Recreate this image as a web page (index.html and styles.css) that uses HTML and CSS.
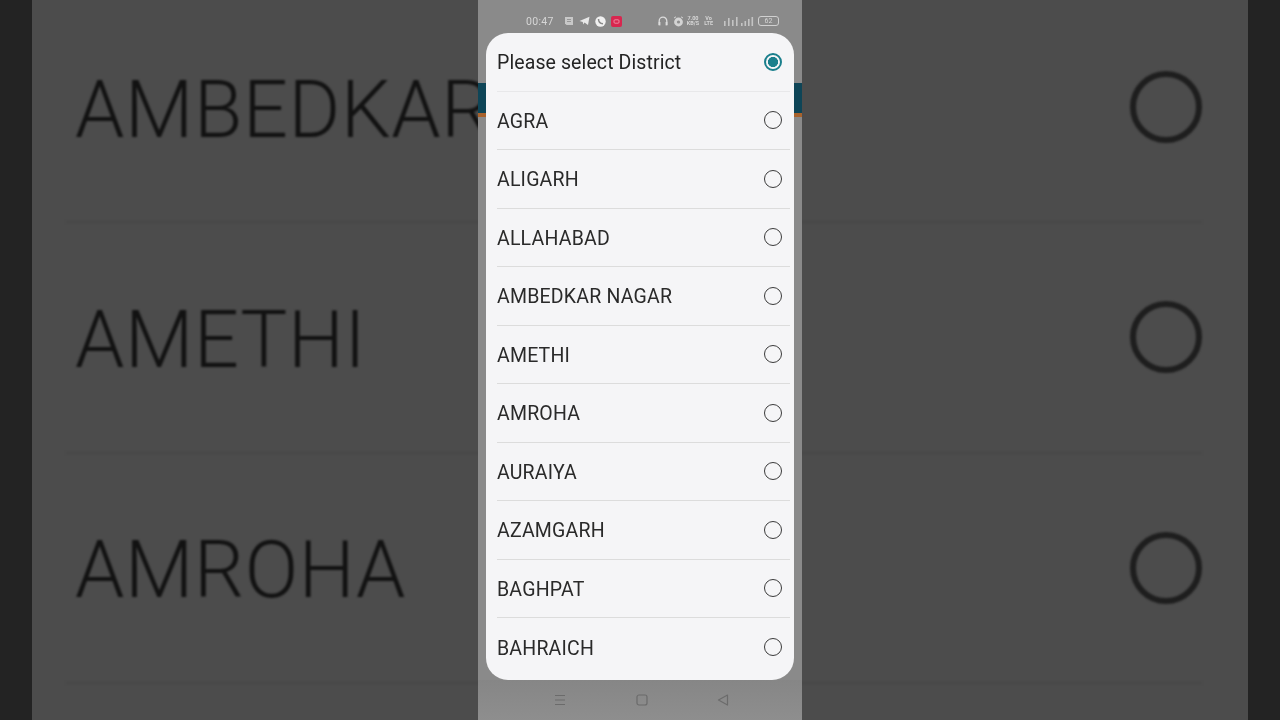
FILE: index.html
```html
<!DOCTYPE html>
<html lang="en">
<head>
<meta charset="utf-8">
<title>Please select District</title>
<link rel="stylesheet" href="styles.css">
</head>
<body>
<div class="video">
  <div class="backdrop">
    <div class="big-row"><span class="big-label">AMBEDKAR</span><span class="big-radio"></span></div>
    <div class="big-row"><span class="big-label">AMETHI</span><span class="big-radio"></span></div>
    <div class="big-row"><span class="big-label">AMROHA</span><span class="big-radio"></span></div>
    <div class="big-row"><span class="big-label"></span></div>
  </div>
  <div class="phone">
    <div class="teal-band"></div>
    <div class="statusbar">
      <div class="status-left">
        <span class="clock">00:47</span>
        <svg class="ico" width="10" height="10" viewBox="0 0 10 10"><path d="M1 1h8v8H2.500L1 7.500z" fill="#c8c8c8"/><path d="M3 3.500h4M3 5.500h4" stroke="#8a8a8a" stroke-width=".8"/></svg>
        <svg class="ico" width="11" height="10" viewBox="0 0 11 10"><path d="M0.500 5L10.500 .8 9 9 5.500 6.600 4.200 8.500 3.800 6z" fill="#e8e8e8"/></svg>
        <svg class="ico" width="11" height="11" viewBox="0 0 11 11"><circle cx="5.500" cy="5.500" r="5.200" fill="#f0f0f0"/><path d="M3.500 3C3.500 5.500 5 7.500 8 7.800" stroke="#8a8a8a" stroke-width="1.500" fill="none"/></svg>
        <svg class="ico" width="11" height="11" viewBox="0 0 11 11"><rect width="11" height="11" rx="2" fill="#d8264f"/><rect x="3" y="3.800" width="5" height="3.400" rx="1" fill="none" stroke="#f2a0b4" stroke-width=".8"/></svg>
      </div>
      <div class="status-right">
        <svg class="ico" width="10" height="10" viewBox="0 0 10 10"><path d="M1.200 9V5a3.800 3.800 0 0 1 7.600 0v4" fill="none" stroke="#dcdcdc" stroke-width="1.300"/><rect x=".6" y="6" width="1.800" height="3.400" fill="#dcdcdc"/><rect x="7.600" y="6" width="1.800" height="3.400" fill="#dcdcdc"/></svg>
        <svg class="ico" width="11" height="11" viewBox="0 0 11 11"><circle cx="5.500" cy="6" r="4.400" fill="#d4d4d4"/><circle cx="5.500" cy="6" r="1.600" fill="#8f8f8f"/><path d="M1 2L3 .8M10 2L8 .8" stroke="#d4d4d4"/></svg>
        <span class="speed first">7.00<br>KB/S</span>
        <span class="speed">Vo<br>LTE</span>
        <svg class="ico sig" width="16" height="10" viewBox="0 0 16 10"><path d="M1 5h1.600v5H1zM5 2h1.600v8H5zM9 4h1.600v6H9zM13 1h1.600v9H13z" fill="#c4c4c4"/></svg>
        <svg class="ico sig2" width="14" height="10" viewBox="0 0 14 10"><path d="M1 7h1.600v3H1zM4.500 5h1.600v5H4.500zM8 3h1.600v7H8zM11.500 1h1.600v9h-1.600z" fill="#c4c4c4"/></svg>
        <span class="battery">62</span>
      </div>
    </div>
    <div class="dialog">
      <div class="option head"><span>Please select District</span><span class="radio on"></span></div>
      <div class="option"><span>AGRA</span><span class="radio"></span></div>
      <div class="option"><span>ALIGARH</span><span class="radio"></span></div>
      <div class="option"><span>ALLAHABAD</span><span class="radio"></span></div>
      <div class="option"><span>AMBEDKAR NAGAR</span><span class="radio"></span></div>
      <div class="option"><span>AMETHI</span><span class="radio"></span></div>
      <div class="option"><span>AMROHA</span><span class="radio"></span></div>
      <div class="option"><span>AURAIYA</span><span class="radio"></span></div>
      <div class="option"><span>AZAMGARH</span><span class="radio"></span></div>
      <div class="option"><span>BAGHPAT</span><span class="radio"></span></div>
      <div class="option last"><span>BAHRAICH</span><span class="radio"></span></div>
    </div>
    <div class="navbar">
      <svg width="14" height="12" viewBox="0 0 14 12"><path d="M2 1.500h10M2 6h10M2 10.500h10" stroke="#6b6b6b" stroke-width="1.200"/></svg>
      <svg width="12" height="12" viewBox="0 0 12 12"><rect x="1" y="1" width="10" height="10" rx="2" fill="none" stroke="#6b6b6b" stroke-width="1.200"/></svg>
      <svg width="12" height="12" viewBox="0 0 12 12"><path d="M10.500 1L1.500 6l9 5z" fill="none" stroke="#6b6b6b" stroke-width="1.200" stroke-linejoin="round"/></svg>
    </div>
  </div>
</div>
</body>
</html>
```

FILE: styles.css
```css
* { box-sizing: border-box; }
html, body { margin: 0; height: 100%; }
body { background: #232323; overflow: hidden; font-family: Roboto, "Noto Sans", sans-serif; }

.video {
  position: relative;
  width: 1280px;
  height: 720px;
  padding: 0 32px;
  overflow: hidden;
}

.backdrop {
  height: 720px;
  background: #4c4c4c;
  padding: 0 46px 0 34px;
  overflow: hidden;
}
.big-row {
  height: 230.500px;
  padding-left: 9px;
  display: flex;
  align-items: center;
  justify-content: space-between;
  border-bottom: 2px solid #484848;
  filter: blur(.9px);
}
.big-row:first-child { height: 223px; padding-bottom: 7px; }
.big-label {
  margin-top: 6px;
  font-size: 79px;
  font-weight: 300;
  letter-spacing: .6px;
  color: #121212;
  white-space: nowrap;
  line-height: 1;
}
.big-radio {
  flex: none;
  width: 72px;
  height: 72px;
  border: 6px solid #1e1e1e;
  border-radius: 50%;
}

.phone {
  position: absolute;
  top: 0;
  left: 478px;
  width: 324px;
  height: 720px;
  background: #8a8a8a;
  padding: 0 8px;
  display: flex;
  flex-direction: column;
}
.teal-band {
  position: absolute;
  left: 0;
  right: 0;
  top: 83px;
  height: 34px;
  background: #0e4557;
  border-bottom: 4px solid #a8622c;
}
.statusbar {
  height: 33px;
  flex: none;
  padding: 9px 15px 0 40px;
  display: flex;
  align-items: center;
  justify-content: space-between;
  color: #d6d6d6;
  font-size: 10.500px;
  filter: blur(.3px);
}
.status-left, .status-right { display: flex; align-items: center; }
.status-left { gap: 5px; }
.status-right { gap: 5px; }
.clock { margin-right: 5px; letter-spacing: .3px; }
.speed { font-size: 5.500px; line-height: 5.500px; text-align: center; font-weight: 700; }
.speed.first { margin-left: -2px; }
.sig { margin-left: 5px; }
.sig2 { margin-left: -4px; }
.ico { display: block; flex: none; }
.battery {
  width: 21px;
  height: 10px;
  margin-left: -1px;
  border: 1px solid #d0d0d0;
  border-radius: 3px;
  font-size: 7px;
  line-height: 8px;
  text-align: center;
}

.dialog {
  position: relative;
  height: 647px;
  flex: none;
  background: #f5f5f7;
  border-radius: 22px;
  overflow: hidden;
}
.option {
  height: 58.500px;
  margin-left: 11px;
  margin-right: 4px;
  padding-right: 8px;
  padding-top: 1.500px;
  display: flex;
  align-items: center;
  justify-content: space-between;
  border-bottom: 1px solid #dcdcdc;
  font-size: 19.500px;
  color: #2a2a2a;
  letter-spacing: .2px;
  filter: blur(.25px);
}
.option .radio { margin-top: -1.500px; }
.option.head { border-bottom-color: #e8e8ea; color: #242424; letter-spacing: .1px; }
.option.last { border-bottom: 0; }
.radio {
  flex: none;
  width: 18px;
  height: 18px;
  border: 1.700px solid #3a3a3a;
  border-radius: 50%;
}
.radio.on {
  border: 2px solid #1a7f8c;
  background: radial-gradient(circle, #1a7f8c 0 4.800px, transparent 5.300px);
}

.navbar {
  flex: 1;
  display: flex;
  align-items: center;
  justify-content: center;
  gap: 69px;
  padding-left: 2px;
  background: linear-gradient(#868686, #8e8e8e);
  margin: 0 -8px;
  position: relative;
}
```
